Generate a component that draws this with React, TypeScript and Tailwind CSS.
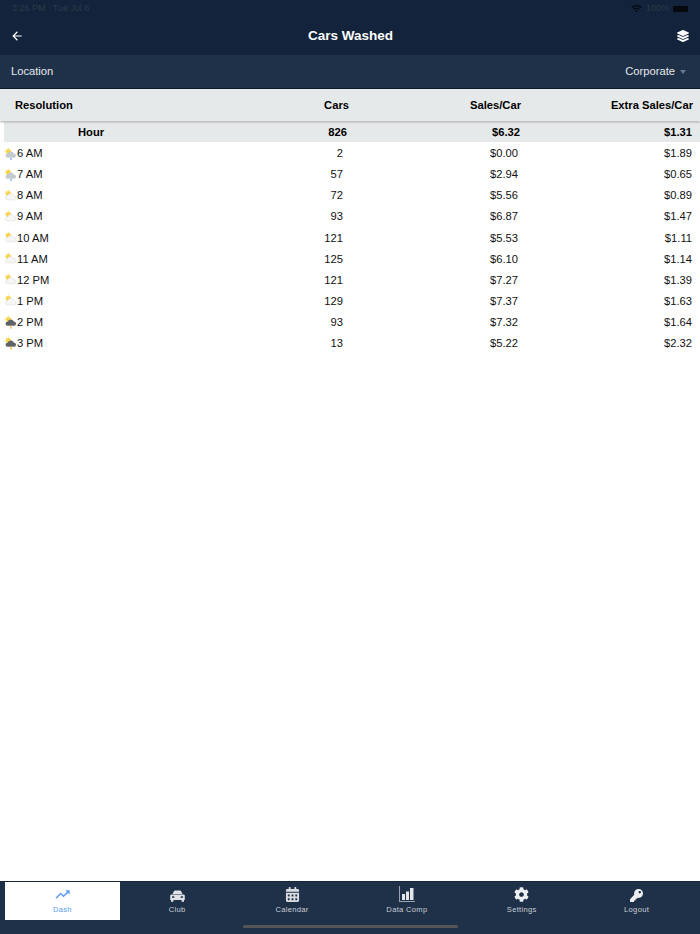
import { MdArrowBack, MdTrendingUp, MdWifi } from "react-icons/md";
import { FaLayerGroup, FaCog, FaKey, FaCalendarAlt } from "react-icons/fa";

const ROWS = [
  { label: "6 AM", cars: "2", sales: "$0.00", extra: "$1.89", icon: "rain" },
  { label: "7 AM", cars: "57", sales: "$2.94", extra: "$0.65", icon: "rain" },
  { label: "8 AM", cars: "72", sales: "$5.56", extra: "$0.89", icon: "cloud" },
  { label: "9 AM", cars: "93", sales: "$6.87", extra: "$1.47", icon: "cloud" },
  { label: "10 AM", cars: "121", sales: "$5.53", extra: "$1.11", icon: "cloud" },
  { label: "11 AM", cars: "125", sales: "$6.10", extra: "$1.14", icon: "cloud" },
  { label: "12 PM", cars: "121", sales: "$7.27", extra: "$1.39", icon: "cloud" },
  { label: "1 PM", cars: "129", sales: "$7.37", extra: "$1.63", icon: "cloud" },
  { label: "2 PM", cars: "93", sales: "$7.32", extra: "$1.64", icon: "storm" },
  { label: "3 PM", cars: "13", sales: "$5.22", extra: "$2.32", icon: "storm" },
];

function WeatherIcon({ kind }: { kind: string }) {
  const cloud = kind === "cloud" ? "#f6f6f4" : kind === "rain" ? "#c3cad0" : "#5f6368";
  return (
    <svg width="13" height="14" viewBox="0 0 13 14" className="shrink-0">
      <circle cx="4.500" cy="4.500" r="2.600" fill="#f7d54a" />
      <path d="M1.800 1.800 2.800 2.800M4.500 .6V1.600M.8 4.500H1.800" stroke="#f7d54a" strokeWidth="0.8" />
      <path
        d="M3.500 10.800a2 2 0 0 1 .1-4 3.300 3.300 0 0 1 6.200-.3 2.200 2.200 0 0 1 .7 4.300Z"
        fill={cloud}
        stroke={kind === "cloud" ? "#dcdcd8" : "none"}
        strokeWidth="0.6"
      />
      {kind === "rain" && <path d="M7 11v2" stroke="#5aa7e8" strokeWidth="1.200" />}
      {kind === "storm" && <path d="M7.500 10.500 6.500 12.400H7.600L7 14" stroke="#f2b632" strokeWidth="0.9" fill="none" />}
    </svg>
  );
}

function TabIcon({ name }: { name: string }) {
  if (name === "Dash") return <MdTrendingUp size={17} className="text-[#5b9cf5]" />;
  if (name === "Club")
    return (
      <svg width="15" height="12" viewBox="0 0 15 12" fill="#dfe2e5">
        <path d="M2.600 4 3.800 1.300C4 .7 4.600.4 5.200.4h4.600c.6 0 1.200.3 1.400.9L12.400 4Z" />
        <path
          fillRule="evenodd"
          d="M1.500 4.600h12c.7 0 1.300.6 1.300 1.300V10H.2V5.900c0-.7.6-1.300 1.300-1.300ZM2 6.200v1.500h2.600L4 6.200Zm11 0h-2l-.6 1.500H13Z"
        />
        <path d="M1 10h2.400v1.800H1ZM11.600 10H14v1.800h-2.400Z" />
      </svg>
    );
  if (name === "Calendar") return <FaCalendarAlt size={15} className="text-[#d8dbdf]" />;
  if (name === "Data Comp")
    return (
      <svg width="16" height="16" viewBox="0 0 16 16">
        <path d="M0 0h1v15h15v1H0Z" fill="#9aa3ae" />
        <path d="M3 8h3v6H3ZM7 5.500h3V14H7ZM11 2h3.500v12H11Z" fill="#e3e5e8" />
      </svg>
    );
  if (name === "Settings") return <FaCog size={15} className="text-[#eceef0]" />;
  return <FaKey size={13} className="text-[#eceef0]" />;
}

const TABS = ["Dash", "Club", "Calendar", "Data Comp", "Settings", "Logout"];

export default function App() {
  return (
    <div className="flex h-[934px] w-[700px] flex-col bg-white font-['Liberation_Sans',Arial,sans-serif] text-black">
      <div className="flex h-[55px] flex-col bg-[#12233b]">
        <div className="flex h-[17px] items-center justify-between pl-3 pr-3 text-[9px] text-[#303a49]">
          <span>3:26 PM&nbsp;&nbsp; Tue Jul 6</span>
          <span className="flex items-center gap-1">
            <MdWifi size={11} className="text-[#05080d]" />
            100%
            <span className="h-[6px] w-[15px] rounded-[1px] bg-[#05080d]" />
          </span>
        </div>
        <div className="flex h-[38px] items-center justify-between pl-[10px] pr-[11px] text-white">
          <MdArrowBack size={14} />
          <span className="text-[13.500px] font-bold">Cars Washed</span>
          <FaLayerGroup size={12} />
        </div>
      </div>

      <div className="flex h-[34px] items-center justify-between border-b border-[#0d1a2c] bg-[#1f3049] pl-[11px] pr-[14px] text-[11.200px] text-[#e6e8ea]">
        <span>Location</span>
        <span className="flex items-center gap-[5px]">
          Corporate
          <span className="mt-[1px] h-0 w-0 border-x-[3.500px] border-t-[4px] border-x-transparent border-t-[#69778a]" />
        </span>
      </div>

      <div className="relative z-10 grid h-[32px] grid-cols-[1fr_174px_172px_172px] items-center bg-[#e6e9e9] pl-[15px] pr-[7px] text-[11.200px] font-bold shadow-[0_1px_2px_rgba(0,0,0,0.35)]">
        <span>Resolution</span>
        <span className="text-right">Cars</span>
        <span className="text-right">Sales/Car</span>
        <span className="text-right">Extra Sales/Car</span>
      </div>

      <div className="ml-1 mt-[1px] grid h-[20px] grid-cols-[1fr_173px_173px_172px] items-center bg-[#e6e9e9] pr-2 text-[11.200px] font-bold">
        <span className="pl-[74px]">Hour</span>
        <span className="text-right">826</span>
        <span className="text-right">$6.32</span>
        <span className="text-right">$1.31</span>
      </div>

      <div className="flex flex-1 flex-col pt-[1px]">
        {ROWS.map((r) => (
          <div key={r.label} className="grid h-[21.100px] grid-cols-[1fr_175px_175px_174px] items-center pl-1 pr-2 text-[11.200px] text-[#111]">
            <span className="flex items-center">
              <WeatherIcon kind={r.icon} />
              {r.label}
            </span>
            <span className="text-right">{r.cars}</span>
            <span className="text-right">{r.sales}</span>
            <span className="text-right">{r.extra}</span>
          </div>
        ))}
      </div>

      <div className="h-[53px] border-t border-[#16263d] bg-[#1f3049]">
        <div className="grid grid-cols-6 pl-[5px] pr-[6px]">
          {TABS.map((t, i) => (
            <div
              key={t}
              className={
                i === 0
                  ? "flex h-[38px] flex-col items-center justify-end gap-[1px] bg-white pb-[5px] text-[7.600px] tracking-[0.3px] text-[#5b9cf5]"
                  : "flex h-[38px] flex-col items-center justify-end gap-[2px] pb-[5px] text-[7.600px] tracking-[0.3px] text-[#c9ced4]"
              }
            >
              <TabIcon name={t} />
              <span>{t}</span>
            </div>
          ))}
        </div>
        <div className="mx-auto mt-[5px] h-[3px] w-[215px] rounded-full bg-[#555]" />
      </div>
    </div>
  );
}
